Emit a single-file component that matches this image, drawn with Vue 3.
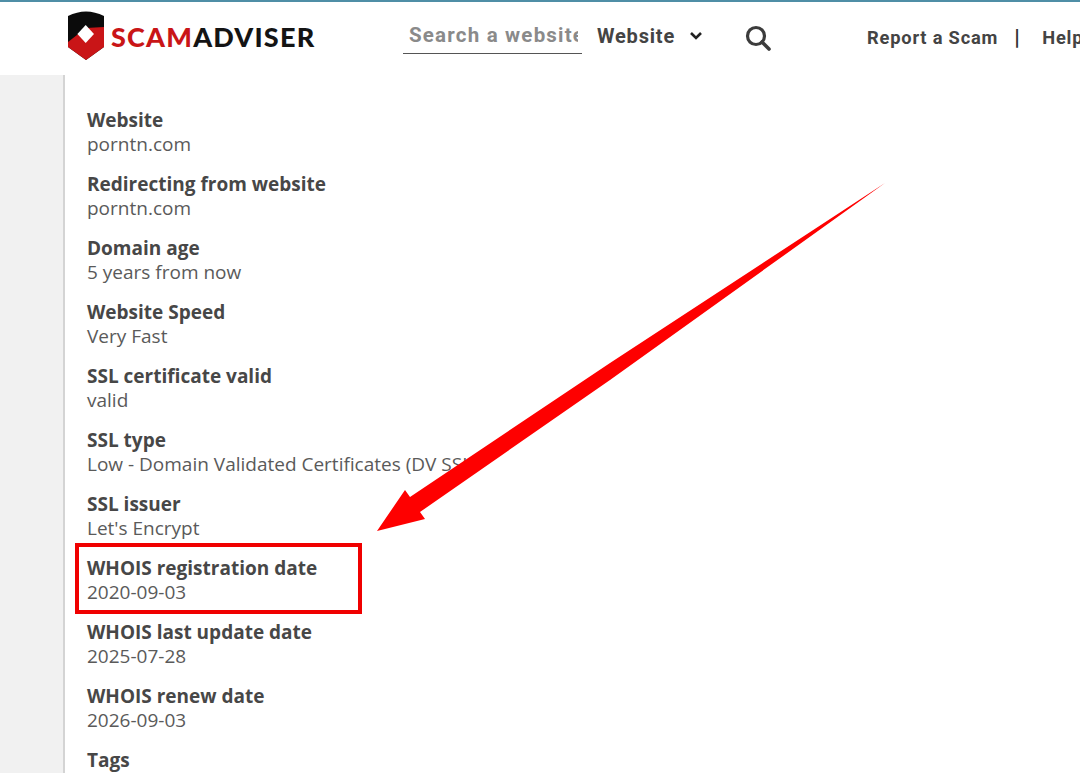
<script setup>
const rows = [
  ['Website', 'porntn.com'],
  ['Redirecting from website', 'porntn.com'],
  ['Domain age', '5 years from now'],
  ['Website Speed', 'Very Fast'],
  ['SSL certificate valid', 'valid'],
  ['SSL type', 'Low - Domain Validated Certificates (DV SSL)'],
  ['SSL issuer', "Let's Encrypt"],
  ['WHOIS registration date', '2020-09-03'],
  ['WHOIS last update date', '2025-07-28'],
  ['WHOIS renew date', '2026-09-03'],
  ['Tags', '']
]
</script>

<template>
  <div class="page">
    <header class="header">
      <div class="logo">
        <svg class="shield" width="36" height="49" viewBox="0 0 36 49">
          <path d="M0 5 Q18 -4 36 5 V36 L18 49 L0 36 Z" fill="#0b0b0b" />
          <path d="M0 31 L18 17 L36 16 V36 L18 49 L0 36 Z" fill="#c91517" />
          <path d="M17.7 14 L26 23 L17.7 32 L9.4 23 Z" fill="#fff" />
        </svg>
        <span class="wordmark"><span class="scam">SCAM</span>ADVISER</span>
      </div>
      <div class="search"><span class="search-text">Search a website</span></div>
      <div class="select">Website</div>
      <svg class="chev" width="14" height="10" viewBox="0 0 14 10">
        <path d="M2 2 L7 7 L12 2" fill="none" stroke="#222" stroke-width="2.6" />
      </svg>
      <svg class="mag" width="28" height="28" viewBox="0 0 28 28">
        <circle cx="12" cy="12" r="8.5" fill="none" stroke="#3c3c3c" stroke-width="3.2" />
        <path d="M18 18 L25 25" stroke="#3c3c3c" stroke-width="3.6" stroke-linecap="round" />
      </svg>
      <nav class="nav">
        <span>Report a Scam</span>
        <span class="sep">|</span>
        <span>Help</span>
      </nav>
    </header>
    <div class="body">
      <aside class="side"></aside>
      <main class="list">
        <div v-for="r in rows" :key="r[0]" class="row">
          <div class="label">{{ r[0] }}</div>
          <div class="value">{{ r[1] }}</div>
        </div>
      </main>
    </div>
    <div class="box"></div>
    <svg class="arrow" width="1080" height="773" viewBox="0 0 1080 773">
      <path d="M885 183 L610 380 L420 512 L425 519 L377 531 L405 490 L410 497 L610 363 Z" fill="#fe0000" />
    </svg>
  </div>
</template>

<style scoped>
.page {
  position: relative;
  width: 1080px;
  height: 773px;
  overflow: hidden;
  background: #fff;
  font-family: "Open Sans", sans-serif;
  color: #4a4a4a;
}
.header {
  height: 73px;
  border-top: 2px solid #4f8ea6;
  display: flex;
  align-items: center;
  white-space: nowrap;
  font-family: Roboto, sans-serif;
  font-weight: 700;
  color: #444;
  font-size: 18.3px;
  letter-spacing: 0.8px;
}
.logo {
  display: flex;
  align-items: center;
  width: 335px;
  padding-left: 68px;
  box-sizing: border-box;
  flex: none;
}
.shield { flex: none; margin-bottom: 6px; }
.wordmark {
  margin-left: 7px;
  margin-bottom: 5px;
  font-family: Lato, sans-serif;
  font-weight: 900;
  font-size: 27px;
  letter-spacing: 1.2px;
  color: #141414;
}
.scam { color: #c91517; }
.search {
  flex: none;
  width: 179px;
  margin-left: 68px;
  padding: 0 0 4px 6px;
  box-sizing: border-box;
  border-bottom: 1px solid #555;
  color: #8a8a8a;
  font-size: 20.5px;
  letter-spacing: 1.2px;
  line-height: 27px;
  margin-top: -1px;
}
.search-text {
  display: block;
  width: 169px;
  overflow: hidden;
}
.select {
  margin-left: 15px;
  font-size: 20px;
  margin-top: -5px;
  width: 92px;
  flex: none;
}
.chev { flex: none; margin-top: -6px; }
.mag { flex: none; margin-left: 41px; margin-top: -2px; }
.nav {
  margin-left: 95px;
  display: flex;
  margin-top: -2px;
}
.sep {
  width: 6px;
  margin: 0 22px 0 16px;
  font-size: 22px;
  line-height: 21px;
  color: #333;
}
.body {
  display: flex;
  height: 698px;
}
.side {
  flex: none;
  width: 63px;
  background: #f1f1f1;
  border-right: 2px solid #d4d4d4;
}
.list {
  padding: 33px 0 0 22px;
}
.row {
  height: 64px;
  font-size: 19px;
  line-height: 24px;
  white-space: nowrap;
}
.label {
  font-weight: 700;
  color: #474747;
}
.value { color: #5a5a5a; }
.box {
  position: absolute;
  left: 75px;
  top: 543px;
  width: 287px;
  height: 71px;
  box-sizing: border-box;
  border: 4px solid #f00000;
}
.arrow {
  position: absolute;
  left: 0;
  top: 0;
}
</style>
